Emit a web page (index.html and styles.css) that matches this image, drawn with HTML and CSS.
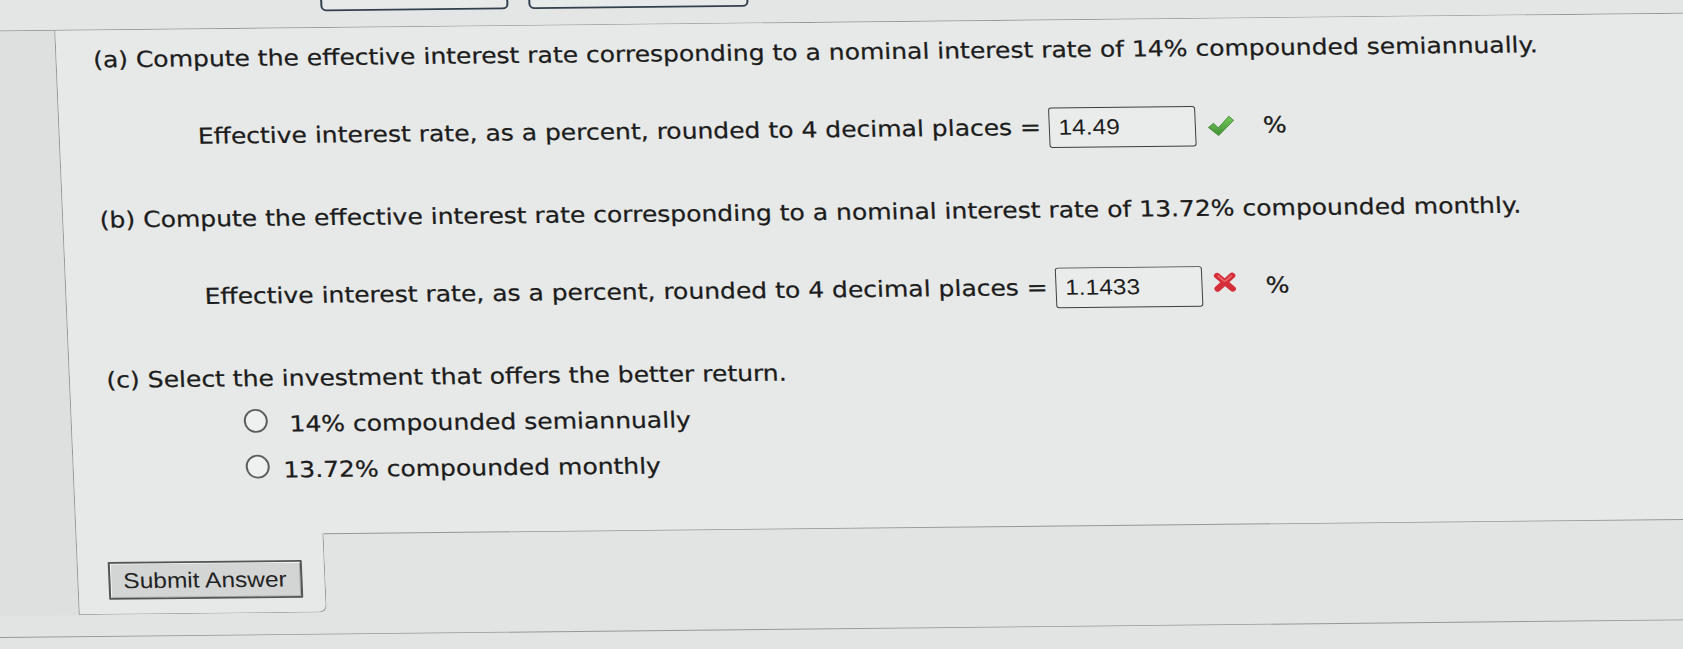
FILE: index.html
```html
<!DOCTYPE html>
<html lang="en">
<head>
  <meta charset="UTF-8">
  <title>Effective Interest Rate</title>
  <meta name="viewport" content="width=device-width, initial-scale=1.0">
  <link rel="stylesheet" href="styles.css">
</head>
<body>

  <div class="screen">
    <div class="topbar">
      <div class="tab"></div>
      <div class="tab wide"></div>
    </div>

    <div class="main">
      <div class="gutter"></div>
      <div class="panel">
        <div class="question">
          <p class="part">(a) Compute the effective interest rate corresponding to a nominal interest rate of 14% compounded semiannually.</p>
          <p class="answer">Effective interest rate, as a percent, rounded to 4 decimal places = <span class="field">14.49</span><svg class="mark check" viewBox="0 0 26 25" width="28" height="26">
              <defs>
                <linearGradient id="green" x1="0" y1="0" x2="0" y2="1">
                  <stop offset="0" stop-color="#79c95a"/>
                  <stop offset="1" stop-color="#3d9134"/>
                </linearGradient>
              </defs>
              <polygon points="1,14 6,9.5 10.5,14.5 21,2 25.5,6.5 10.5,23" fill="url(#green)" stroke="#347f2c" stroke-width="0.8" stroke-linejoin="round"/>
            </svg><span class="unit">%</span></p>

          <p class="part">(b) Compute the effective interest rate corresponding to a nominal interest rate of 13.72% compounded monthly.</p>
          <p class="answer">Effective interest rate, as a percent, rounded to 4 decimal places = <span class="field">1.1433</span><svg class="mark cross" viewBox="0 0 25 25" width="25" height="25">
              <path d="M5 5 L20 20 M20 5 L5 20" stroke="#d42f3a" stroke-width="6.5" stroke-linecap="round"/>
              <path d="M6 5.5 L12 11.5 M19 5.5 L13.5 11" stroke="#ef6a70" stroke-width="1.6" stroke-linecap="round"/>
            </svg><span class="unit">%</span></p>

          <p class="part">(c) Select the investment that offers the better return.</p>
          <label class="choice"><span class="radio"></span>&nbsp;14% compounded semiannually</label>
          <label class="choice"><span class="radio"></span>13.72% compounded monthly</label>
        </div>

        <div class="footer">
          <div class="submit-area">
            <button class="submit">Submit Answer</button>
          </div>
          <div class="rest"></div>
        </div>
      </div>
    </div>

    <div class="below"></div>
  </div>

</body>
</html>
```

FILE: styles.css
```css
html, body {
  margin: 0;
  padding: 0;
  height: 100%;
  overflow: hidden;
}

body {
  background: #e1e4e3;
  font-family: "DejaVu Sans", Verdana, sans-serif;
  color: #1c1c1c;
}

/* the reference is a photo of a screen, so the whole sheet is tilted a little */
.screen {
  width: 1760px;
  margin-left: -30px;
  transform: matrix(1, -0.0105, 0.037, 0.88, 0, 0);
  transform-origin: 0 0;
}

.topbar {
  display: flex;
  gap: 20px;
  height: 35px;
  padding-left: 350px;
  background: #e4e6e5;
  border-bottom: 1.5px solid #959898;
}

.tab {
  box-sizing: border-box;
  width: 188px;
  height: 40.5px;
  margin-top: -24px;
  border: 2.5px solid #33414f;
  border-radius: 6px;
  background: #e8eaea;
}

.tab.wide {
  width: 220px;
}

.main {
  display: flex;
}

.gutter {
  width: 83px;
  background: #dde0df;
}

.panel {
  flex: 1;
  border-left: 1.5px solid #959898;
}

.question {
  padding: 18.7px 0 57.6px 36.5px;
  background: #e7e9e8;
  -webkit-text-stroke: 0.3px #1c1c1c;
}

.part {
  margin: 56px 0 0;
  font-size: 25px;
  line-height: 30px;
}

.part:first-child {
  margin-top: 0;
}

.answer {
  margin: 50px 0 0 101.5px;
  font-size: 25px;
  line-height: 30px;
}

.field {
  display: inline-block;
  box-sizing: border-box;
  width: 147px;
  height: 46px;
  padding-left: 8.5px;
  border: 1.5px solid #3e3e3e;
  border-radius: 3px;
  background: #eaeceb;
  font-family: "Liberation Sans", Arial, sans-serif;
  font-size: 24.5px;
  line-height: 43px;
  color: #1e1e1e;
  -webkit-text-stroke: 0;
}

.mark {
  margin-left: 11px;
}

.check {
  vertical-align: -5px;
}

.cross {
  margin-left: 10px;
  vertical-align: 0;
}

.unit {
  margin-left: 28px;
}

.choice {
  display: block;
  margin: 19px 0 0 135px;
  font-size: 25px;
  line-height: 30px;
}

.radio {
  display: inline-block;
  box-sizing: border-box;
  width: 24px;
  height: 27px;
  margin-right: 14px;
  border: 2px solid #5e5e5e;
  border-radius: 50%;
  background: #eff0f0;
  vertical-align: -1px;
}

.footer {
  display: flex;
  align-items: flex-start;
}

.submit-area {
  box-sizing: border-box;
  width: 246.5px;
  padding: 30px 0 15.5px 29.5px;
  background: #e7e9e8;
  border-right: 1.5px solid #959898;
  border-bottom: 1.5px solid #959898;
  border-bottom-right-radius: 8px;
}

.submit {
  display: block;
  box-sizing: border-box;
  width: 194px;
  height: 43px;
  padding: 0;
  border: 2px solid #555;
  border-radius: 1px;
  background: #d3d5d5;
  box-shadow: inset 1px 1px 0 #f4f5f5, inset -1px -1px 0 #a9abab;
  font-family: "Liberation Sans", Arial, sans-serif;
  font-size: 24.5px;
  color: #222;
  cursor: pointer;
}

.rest {
  flex: 1;
  border-top: 1.5px solid #959898;
}

.below {
  margin-top: 24px;
  border-top: 1.5px solid #959898;
}
```
